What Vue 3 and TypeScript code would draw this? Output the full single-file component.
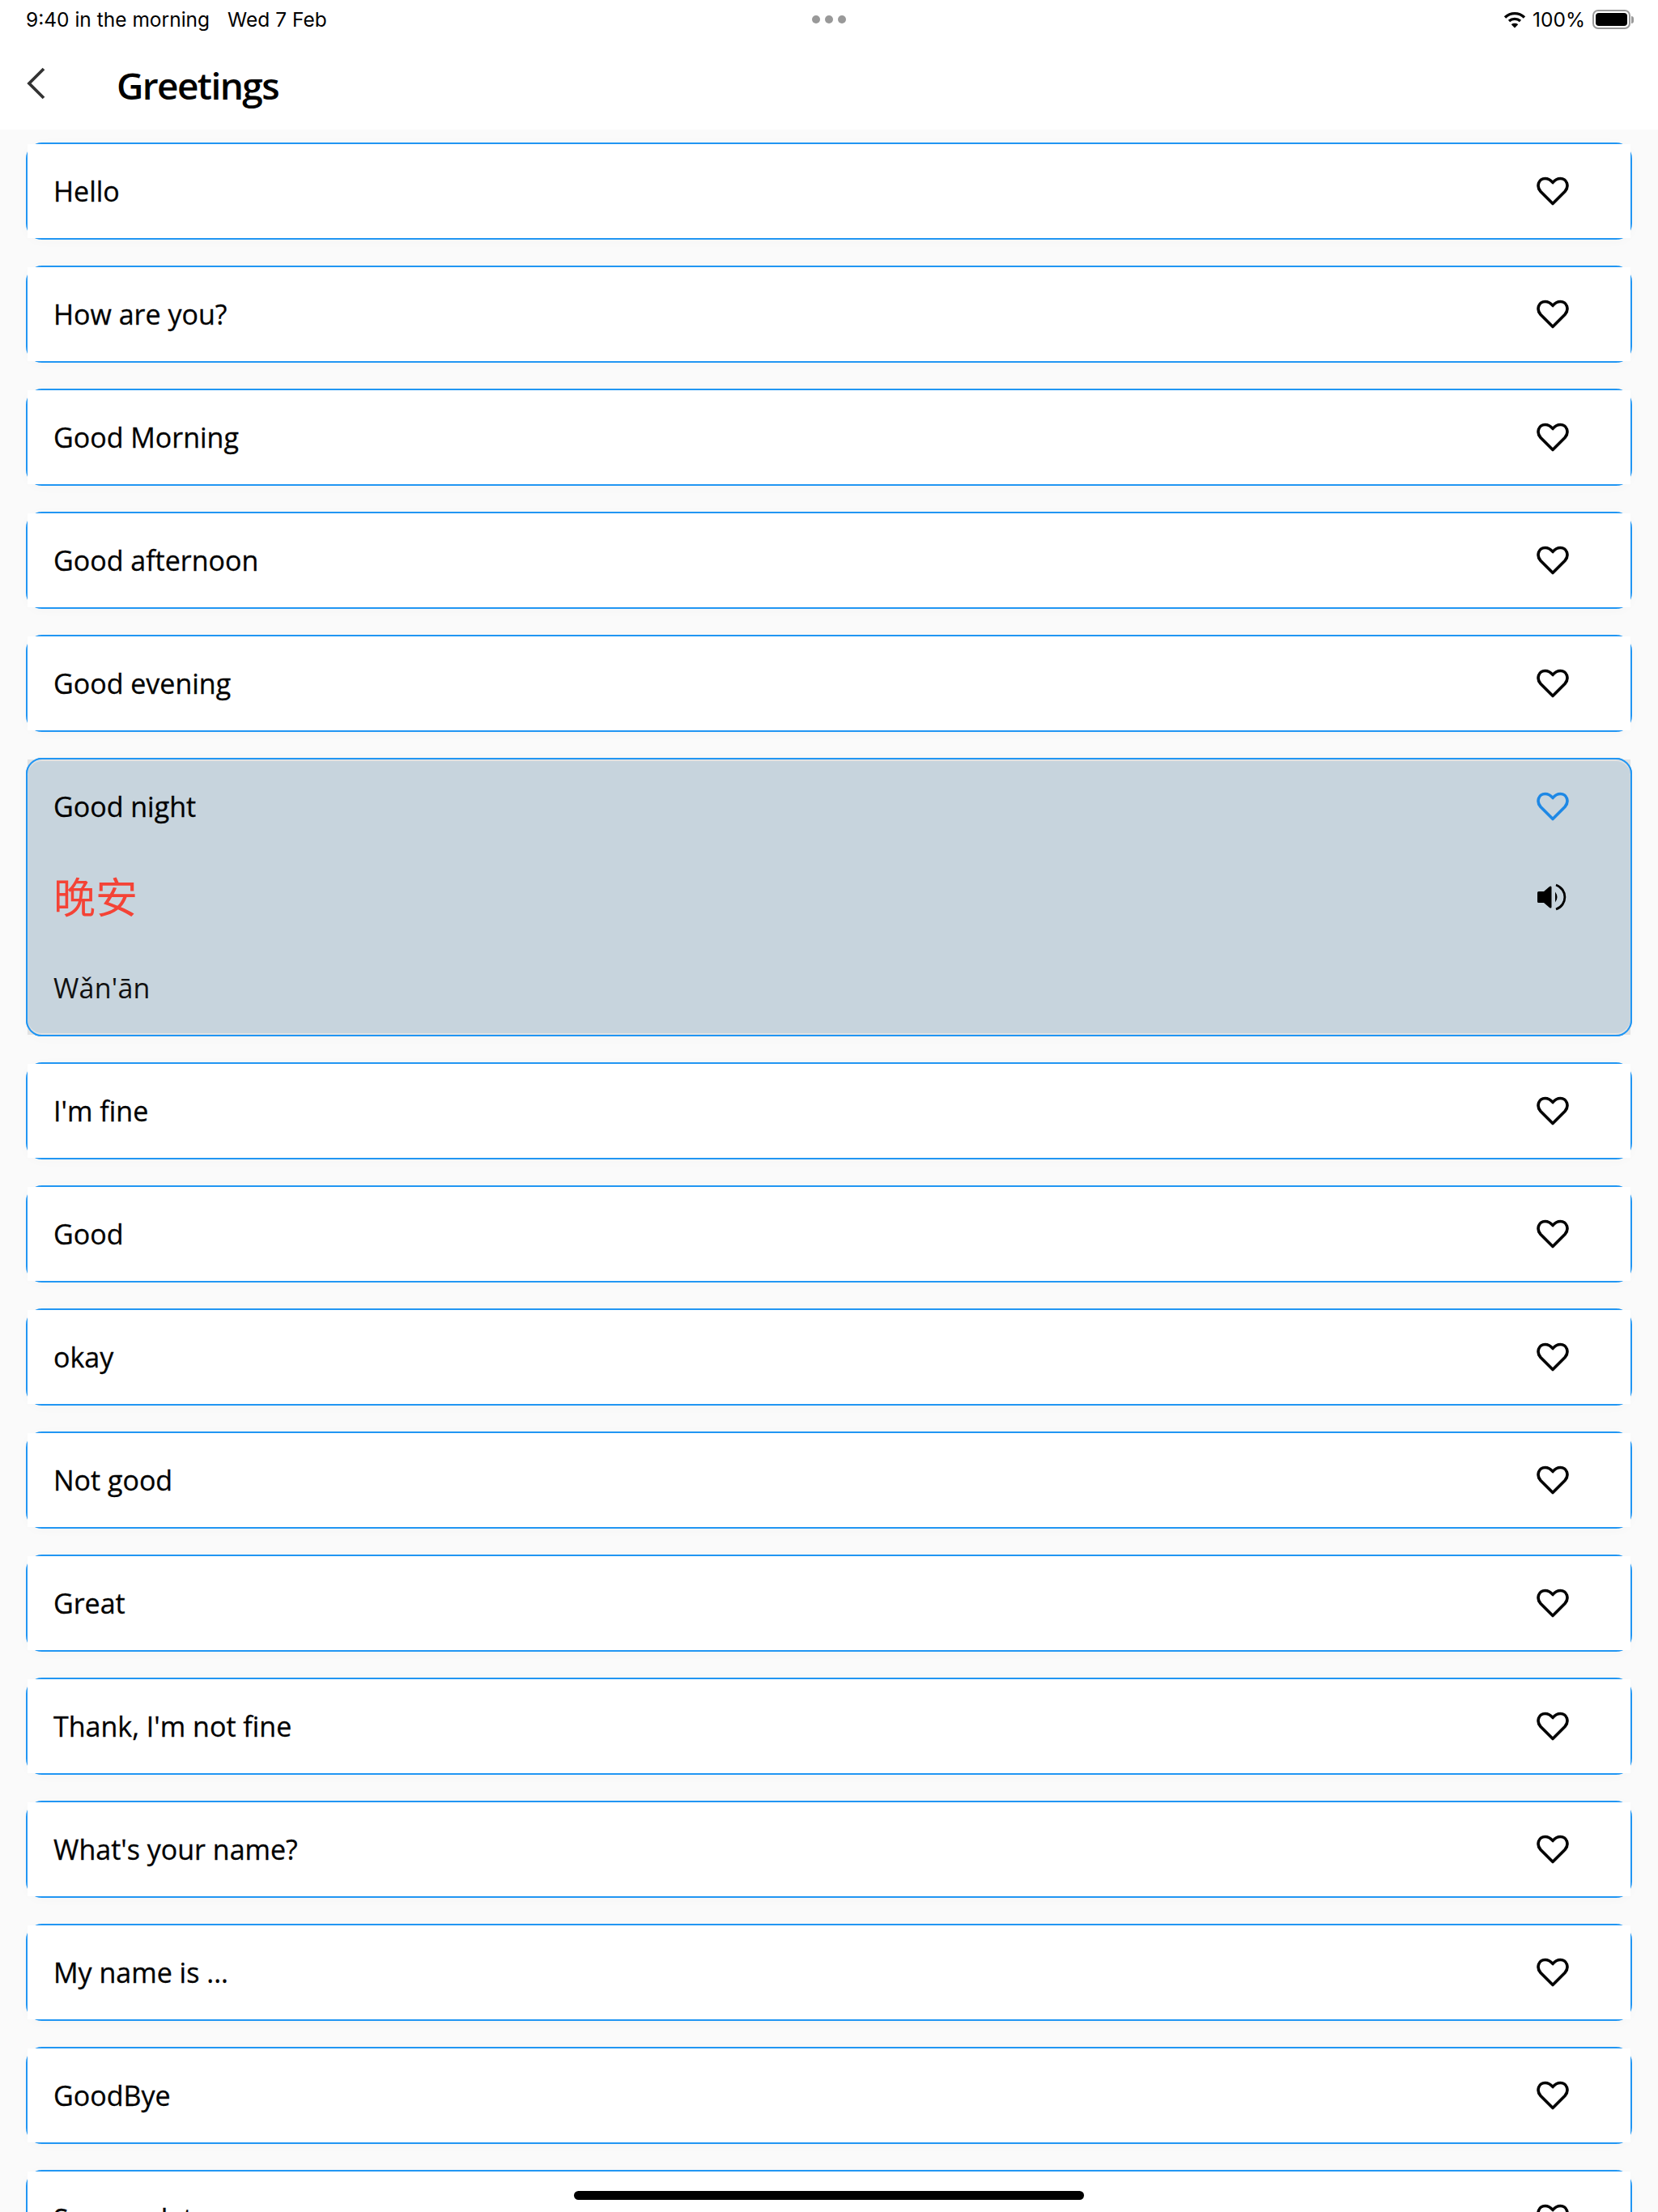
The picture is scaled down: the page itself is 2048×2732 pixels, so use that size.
<script setup lang="ts">
import { ref } from 'vue'

const phrases: string[] = [
  'Hello', 'How are you?', 'Good Morning', 'Good afternoon', 'Good evening', 'Good night',
  "I'm fine", 'Good', 'okay', 'Not good', 'Great', "Thank, I'm not fine",
  "What's your name?", 'My name is ...', 'GoodBye', 'See you later',
]
const selected = ref<number>(5)
const heartPath = 'M20 33.5 L5 18.5 C-1 11.5 3 2.5 10.5 2.5 C15 2.5 18 5 20 7.5 C22 5 25 2.5 29.5 2.5 C37 2.5 41 11.5 35 18.5 Z'
</script>

<template>
  <div class="page">
    <div class="status">
      <div class="status-left">
        <span>9:40 in the morning</span>
        <span>Wed 7 Feb</span>
      </div>
      <div class="dots"><i></i><i></i><i></i></div>
      <div class="status-right">
        <svg class="wifi" width="28" height="21" viewBox="0 0 28 21" fill="none" stroke="#000" stroke-width="3.4">
          <path d="M2 7.5 C9 1 19 1 26 7.5" />
          <path d="M7 12 C11 8.5 17 8.5 21 12" />
          <path d="M14 20.5 L9.8 16.2 C12 14.4 16 14.4 18.2 16.2 Z" fill="#000" stroke="none" />
        </svg>
        <span class="pct">100%</span>
        <div class="battery"><div class="cell"></div></div>
        <div class="nub"></div>
      </div>
    </div>

    <header class="bar">
      <svg class="back" width="24" height="40" viewBox="0 0 24 40" fill="none" stroke="#333" stroke-width="3.8">
        <path d="M22 2 L4 20 L22 38" />
      </svg>
      <h1 class="title">Greetings</h1>
    </header>

    <main class="list">
      <div v-for="(p, i) in phrases" :key="p" class="card" @click="selected = i">
        <div class="inner" :class="{ on: selected === i }">
          <div class="fill">
            <div class="row">
              <span class="text">{{ p }}</span>
              <svg class="heart" width="40" height="36" viewBox="0 0 40 36" fill="none" stroke-width="3.6" stroke-linejoin="round">
                <path :d="heartPath" />
              </svg>
            </div>
            <template v-if="selected === i">
              <div class="row">
                <span class="zh">晚安</span>
                <svg class="speaker" width="37" height="34" viewBox="0 0 37 34">
                  <path d="M1.5 10 H8 L15 4 Q17.5 2.5 17.5 5 V29 Q17.5 31.5 15 30 L8 24 H1.5 Q0 24 0 22.5 V11.5 Q0 10 1.5 10 Z" fill="#000" />
                  <path d="M22 10.5 Q27 17 22 23.5 Z" fill="#000" />
                  <path d="M23 2 C37.5 7 37.5 27 23 32" fill="none" stroke="#000" stroke-width="2.8" />
                </svg>
              </div>
              <div class="row"><span class="pinyin">Wǎn'ān</span></div>
            </template>
          </div>
        </div>
      </div>
    </main>

    <div class="home"></div>
  </div>
</template>

<style>
html, body { margin: 0; background: #fafafa; }
</style>

<style scoped>
.page {
  position: relative;
  width: 2048px;
  height: 2732px;
  overflow: hidden;
  background: #fafafa;
  font-family: "Open Sans", "Noto Sans CJK SC", sans-serif;
  color: #000;
}
.status {
  height: 48px;
  background: #fff;
  position: relative;
  display: flex;
  align-items: center;
  justify-content: space-between;
  padding: 0 30px 0 32px;
  font-family: Inter, sans-serif;
  font-size: 24.5px;
}
.status-left { display: flex; gap: 22px; margin-top: -1px; }
.dots {
  position: absolute;
  left: 1003px;
  top: 19px;
  display: flex;
  gap: 6px;
}
.dots i { width: 10px; height: 10px; border-radius: 50%; background: #999; display: block; }
.status-right { display: flex; align-items: center; }
.wifi { margin-right: 8px; }
.pct { margin-right: 9px; margin-top: -1px; }
.battery {
  width: 47px;
  height: 24px;
  box-sizing: border-box;
  border: 2px solid #999;
  border-radius: 7px;
  padding: 2px;
}
.cell { width: 100%; height: 100%; background: #000; border-radius: 4px; }
.nub {
  width: 3px;
  height: 9px;
  margin-left: 1px;
  background: #999;
  border-radius: 0 4px 4px 0;
}
.bar {
  height: 112px;
  background: #fff;
  display: flex;
  align-items: center;
  padding-left: 32px;
}
.back { margin-top: -2px; flex: none; }
.title {
  margin: 2px 0 0 88px;
  font-size: 46px;
  font-weight: 600;
  line-height: 1;
  letter-spacing: -1.6px;
}
.list {
  padding: 16px 32px 0;
  display: flex;
  flex-direction: column;
  gap: 32px;
}
.card {
  flex: none;
  border: 2px solid #2196f3;
  border-radius: 20px;
  box-shadow: 0 2px 14px rgba(0, 0, 0, 0.025);
}
.inner { background: #fff; padding: 2px 0; }
.inner.on { background: #e2e2e2; position: relative; }
.inner.on::after {
  content: "";
  position: absolute;
  inset: -2px;
  border: 2px solid #2196f3;
  border-radius: 20px;
  pointer-events: none;
}
.inner.on .fill { background: #c7d4dd; border-radius: 18px; }
.inner.on .heart { stroke: #1e88e5; }
.row {
  height: 112px;
  display: flex;
  align-items: center;
  justify-content: space-between;
  padding: 0 76px 0 32px;
}
.text { font-size: 34px; -webkit-text-stroke: 0.3px #000; }
.heart { stroke: #000; }
.zh { font-size: 52px; line-height: 1.2; margin-bottom: 4px; color: #f44336; font-family: "Noto Sans CJK SC", sans-serif; }
.speaker { margin-right: 2px; }
.pinyin { font-size: 34px; color: #111; letter-spacing: 0.2px; }
.home {
  position: absolute;
  left: 709px;
  bottom: 15px;
  width: 630px;
  height: 11px;
  border-radius: 6px;
  background: #000;
}
</style>
